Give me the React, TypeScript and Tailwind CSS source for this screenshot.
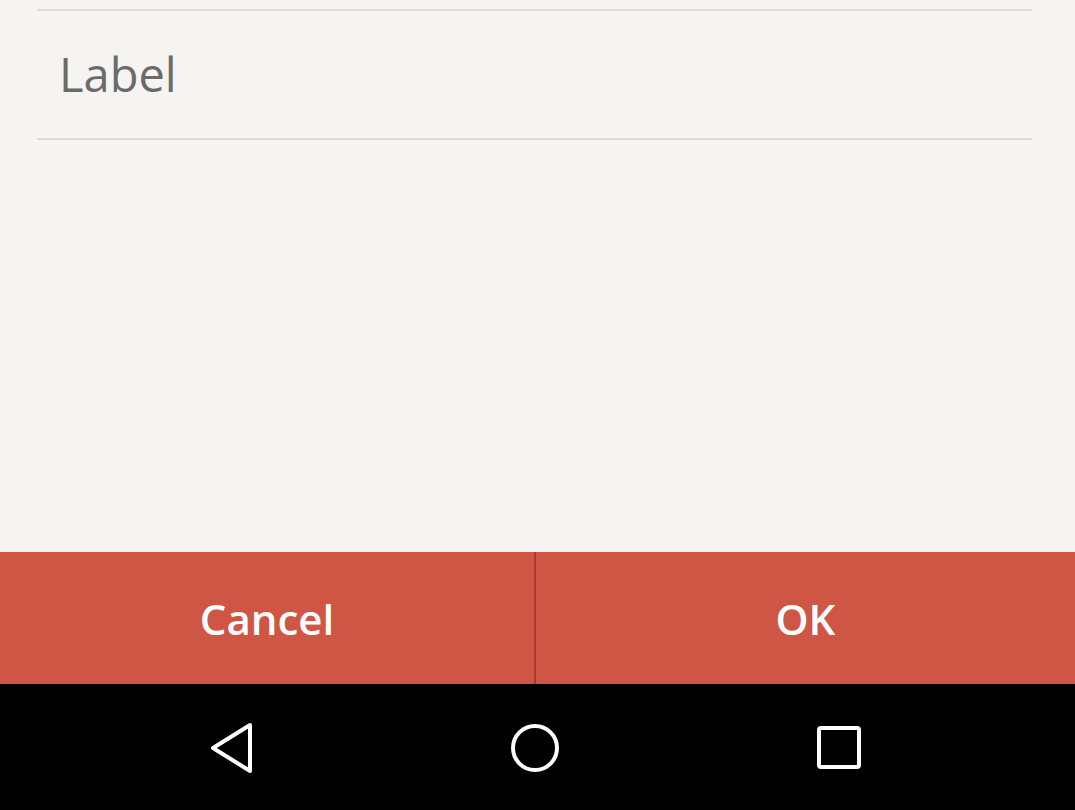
import React from 'react';

const NavBack = () => (
  <svg width="46" height="52" viewBox="0 0 46 52" fill="none">
    <path d="M42 3 L5 26 L42 49 Z" stroke="white" strokeWidth="4" strokeLinejoin="round" />
  </svg>
);

const NavHome = () => (
  <svg width="50" height="50" viewBox="0 0 50 50" fill="none">
    <circle cx="25" cy="25" r="22" stroke="white" strokeWidth="4" />
  </svg>
);

const NavRecent = () => (
  <svg width="46" height="46" viewBox="0 0 46 46" fill="none">
    <rect x="3" y="3" width="40" height="39" rx="2" stroke="white" strokeWidth="4" />
  </svg>
);

const App = () => {
  return (
    <div className="h-[810px] w-[1075px] flex flex-col bg-[#f5f4f2] font-['Open_Sans',sans-serif] overflow-hidden">
      {/* Field */}
      <div className="pt-[9px] ml-[37px] mr-[43px]">
        <div className="border-t-2 border-b-2 border-[#dcdbd8] h-[131px] flex items-center pl-[22px]">
          <span className="text-[47px] text-[#6b6a68] leading-none">Label</span>
        </div>
      </div>

      <div className="flex-1" />

      {/* Dialog buttons */}
      <div className="h-[132px] flex bg-[#cf5544] text-white font-semibold text-[42px]">
        <button className="w-[536px] border-r-2 border-[#a63a30] flex items-center justify-center pt-[1px]">
          Cancel
        </button>
        <button className="flex-1 flex items-center justify-center pt-[1px]">OK</button>
      </div>

      {/* Android nav bar */}
      <div className="h-[126px] bg-black flex items-center justify-center gap-[256px] pt-[2px] pr-[6px]">
        <NavBack />
        <NavHome />
        <NavRecent />
      </div>
    </div>
  );
};

export default App;
